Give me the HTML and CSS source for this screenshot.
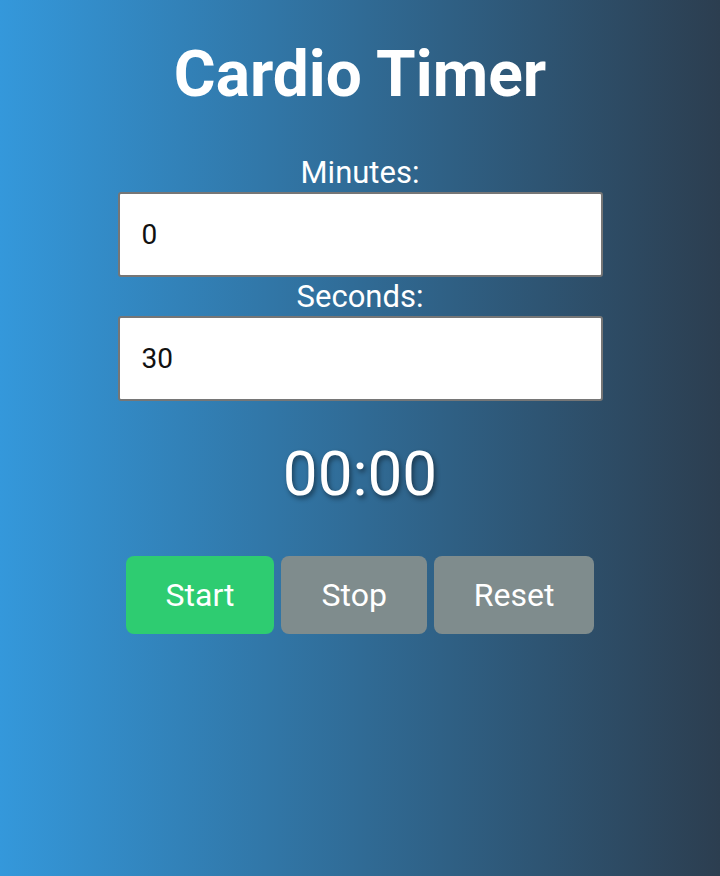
FILE: index.html
```html
<!DOCTYPE html>
<html lang="en">
<head>
<meta charset="utf-8">
<title>Cardio Timer</title>
<link rel="stylesheet" href="styles.css">
</head>
<body>
  <main class="app">
    <h1 class="title">Cardio Timer</h1>
    <div class="fields">
      <label class="field-label" for="minutes">Minutes:</label>
      <input class="field-input" id="minutes" type="text" value="0">
      <label class="field-label" for="seconds">Seconds:</label>
      <input class="field-input" id="seconds" type="text" value="30">
    </div>
    <div class="display">00:00</div>
    <div class="controls">
      <button class="btn btn-start">Start</button>
      <button class="btn btn-muted">Stop</button>
      <button class="btn btn-muted">Reset</button>
    </div>
  </main>
</body>
</html>
```
FILE: styles.css
```css
html, body {
  margin: 0;
  padding: 0;
  height: 100%;
}

body {
  background: linear-gradient(to right, #3498db, #2c3e50);
  font-family: Roboto, "Noto Sans", sans-serif;
  color: #ffffff;
  min-height: 876px;
}

.app {
  display: flex;
  flex-direction: column;
  align-items: center;
  text-align: center;
}

.title {
  margin: 37px 0 0;
  font-size: 64px;
  font-weight: 700;
  line-height: 75px;
}

.fields {
  display: flex;
  flex-direction: column;
  align-items: center;
  width: 485px;
  margin-top: 42px;
}

.field-label {
  display: block;
  font-size: 31px;
  line-height: 38px;
}

.field-input {
  box-sizing: border-box;
  width: 485px;
  height: 85px;
  margin: 0 0 1px;
  padding: 0 22px;
  border: 2px solid #767676;
  border-radius: 3px;
  background: #ffffff;
  font-family: Roboto, "Noto Sans", sans-serif;
  font-size: 28px;
  color: #111111;
  outline: none;
}

.display {
  margin-top: 36px;
  font-size: 62px;
  line-height: 72px;
  text-shadow: 2px 3px 5px rgba(0, 0, 0, 0.45);
}

.controls {
  display: flex;
  gap: 7px;
  margin-top: 46px;
}

.btn {
  padding: 20px 40px;
  border: none;
  border-radius: 8px;
  font-family: Roboto, "Noto Sans", sans-serif;
  font-size: 32px;
  line-height: 38px;
  color: #ffffff;
  cursor: pointer;
}

.btn-start {
  background: #2ecc71;
}

.btn-muted {
  background: #7f8c8d;
}
```
